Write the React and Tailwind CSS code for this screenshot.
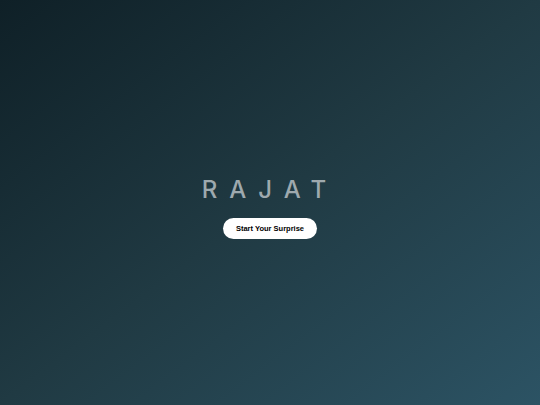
export default function App() {
  return (
    <div className="w-[540px] h-[405px] bg-gradient-to-br from-[#0f2027] via-[#203a43] to-[#2c5364] flex flex-col items-center justify-center font-['Liberation_Sans',Arial,sans-serif]">
      <h1 className="mt-[12px] font-['Inter','Liberation_Sans',sans-serif] text-[24px] leading-none tracking-[0.5em] text-[#9ea9ae] font-medium">RAJAT</h1>
      <button className="mt-[16px] h-[21px] px-[13px] rounded-full bg-white text-black text-[7.5px] font-bold leading-none">Start Your Surprise</button>
    </div>
  );
}
